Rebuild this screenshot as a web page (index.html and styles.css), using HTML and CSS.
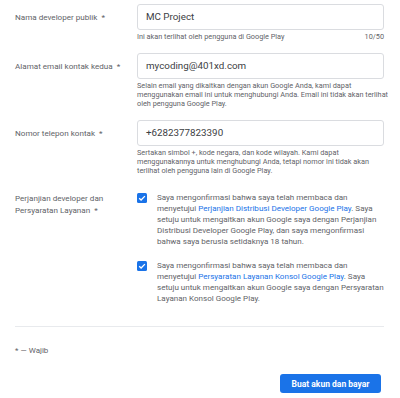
FILE: index.html
```html
<!DOCTYPE html>
<html lang="id">
<head>
<meta charset="utf-8">
<link rel="stylesheet" href="styles.css">
</head>
<body>
<div class="form">
  <div class="row row-first">
    <div class="label label-input">Nama developer publik&nbsp; *</div>
    <div class="field">
      <div class="input">MC Project</div>
      <div class="helper helper-split"><span>Ini akan terlihat oleh pengguna di Google Play</span><span>10/50</span></div>
    </div>
  </div>
  <div class="row">
    <div class="label label-input">Alamat email kontak kedua&nbsp; *</div>
    <div class="field">
      <div class="input">mycoding@401xd.com</div>
      <div class="helper helper-lines">Selain email yang dikaitkan dengan akun Google Anda, kami dapat<br>menggunakan email ini untuk menghubungi Anda. Email ini tidak akan terlihat<br>oleh pengguna Google Play.</div>
    </div>
  </div>
  <div class="row">
    <div class="label label-input">Nomor telepon kontak&nbsp; *</div>
    <div class="field">
      <div class="input">+6282377823390</div>
      <div class="helper helper-lines">Sertakan simbol +, kode negara, dan kode wilayah. Kami dapat<br>menggunakannya untuk menghubungi Anda, tetapi nomor ini tidak akan<br>terlihat oleh pengguna lain di Google Play.</div>
    </div>
  </div>
  <div class="row row-terms">
    <div class="label">Perjanjian developer dan Persyaratan Layanan&nbsp; *</div>
    <div class="field">
      <div class="check-item">
        <span class="checkbox"><svg viewBox="0 0 10 10" width="10" height="10"><path d="M2.2 5.2 L4.1 7 L7.9 3.1" fill="none" stroke="#fff" stroke-width="1.3"/></svg></span>
        <p class="check-text">Saya mengonfirmasi bahwa saya telah membaca dan menyetujui <span class="link">Perjanjian Distribusi Developer Google Play</span>. Saya setuju untuk mengaitkan akun Google saya dengan Perjanjian Distribusi Developer Google Play, dan saya mengonfirmasi bahwa saya berusia setidaknya 18 tahun.</p>
      </div>
      <div class="check-item check-item-2">
        <span class="checkbox"><svg viewBox="0 0 10 10" width="10" height="10"><path d="M2.2 5.2 L4.1 7 L7.9 3.1" fill="none" stroke="#fff" stroke-width="1.3"/></svg></span>
        <p class="check-text">Saya mengonfirmasi bahwa saya telah membaca dan menyetujui <span class="link">Persyaratan Layanan Konsol Google Play</span>. Saya setuju untuk mengaitkan akun Google saya dengan Persyaratan Layanan Konsol Google Play.</p>
      </div>
    </div>
  </div>
  <div class="divider"></div>
  <div class="required">* — Wajib</div>
  <div class="actions">
    <button class="btn">Buat akun dan bayar</button>
  </div>
</div>
</body>
</html>
```

FILE: styles.css
```css
html, body {
  margin: 0;
  padding: 0;
  background: #ffffff;
}
body {
  font-family: Roboto, "Liberation Sans", Arial, sans-serif;
  color: #5f6368;
}
.form {
  padding: 4px 16px 0 15px;
}
.row {
  display: flex;
  margin-top: 12px;
}
.row-first {
  margin-top: 0;
}
.label {
  width: 122px;
  flex: none;
  font-size: 8.1px;
  line-height: 12px;
  color: #5f6368;
  padding-right: 8px;
  box-sizing: border-box;
}
.label-input {
  padding-top: 7px;
}
.field {
  flex: 1;
  min-width: 0;
}
.input {
  height: 26px;
  box-sizing: border-box;
  border: 1px solid #dadce0;
  border-radius: 3px;
  padding: 0 8px;
  font-size: 9.8px;
  line-height: 24px;
  color: #3c4043;
}
.helper {
  margin-top: 2px;
  font-size: 7.3px;
  line-height: 9px;
  color: #5f6368;
}
.helper-lines {
  white-space: nowrap;
}
.helper-split {
  display: flex;
  justify-content: space-between;
}
.row-terms {
  margin-top: 17px;
}
.check-item {
  display: flex;
  align-items: flex-start;
}
.check-item-2 {
  margin-top: 13px;
}
.checkbox {
  flex: none;
  width: 10px;
  height: 10px;
  margin-top: 1px;
  margin-right: 10px;
  background: #1a73e8;
  border-radius: 1.5px;
  display: flex;
}
.check-text {
  margin: 0;
  font-size: 8.05px;
  line-height: 11px;
  color: #5f6368;
}
.link {
  color: #1a73e8;
}
.divider {
  height: 1px;
  background: #e8eaed;
  margin-top: 22px;
}
.required {
  margin-top: 18px;
  font-size: 8px;
  line-height: 12px;
  color: #5f6368;
}
.actions {
  display: flex;
  justify-content: flex-end;
  margin-top: 17px;
  padding-right: 3px;
}
.btn {
  width: 101px;
  height: 19px;
  border: none;
  border-radius: 3px;
  background: #1a73e8;
  color: #ffffff;
  font-family: Roboto, "Liberation Sans", Arial, sans-serif;
  font-size: 8.5px;
  font-weight: 700;
  padding: 0;
}
```
